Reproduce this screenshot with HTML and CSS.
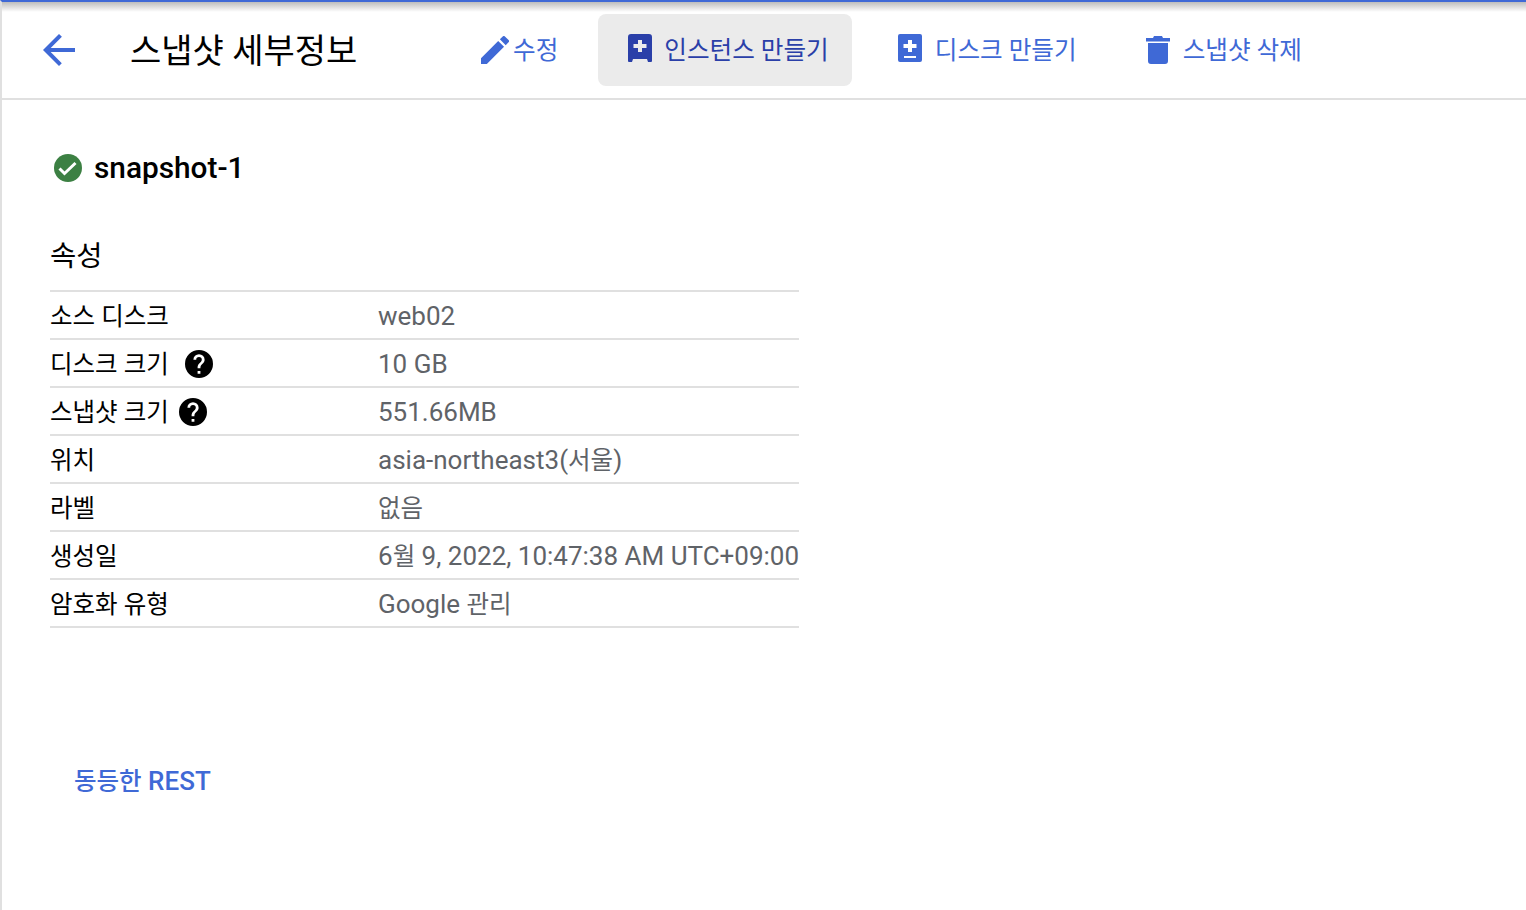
FILE: index.html
```html
<!DOCTYPE html>
<html lang="ko">
<head>
    <meta charset="UTF-8">
    <title>스냅샷 세부정보</title>
    <link rel="stylesheet" href="styles.css">
</head>
<body>

<div class="page">
    <header class="toolbar">
        <a class="back-link" href="#" aria-label="뒤로">
            <svg width="32" height="32" viewBox="8 8 32 32"><path d="M40 22H15.7l11.2-11.2L24 8 8 24l16 16 2.8-2.8L15.7 26H40z"/></svg>
        </a>
        <h1 class="page-title">스냅샷 세부정보</h1>
        <nav class="actions">
            <a class="action action-edit" href="#">
                <svg class="icon-low" width="28" height="28" viewBox="3 3 18 18"><path d="M3 17.25V21h3.75L17.81 9.94l-3.75-3.75L3 17.25zM20.71 7.04a1 1 0 0 0 0-1.41l-2.34-2.34a1 1 0 0 0-1.41 0l-1.83 1.83 3.75 3.75 1.83-1.83z"/></svg>
                <span>수정</span>
            </a>
            <a class="action action-active" href="#">
                <svg width="24" height="28" viewBox="0 0 24 28"><path d="M3 0h18a3 3 0 0 1 3 3v24a1 1 0 0 1-1 1h-3l-1-3H5l-1 3H1a1 1 0 0 1-1-1V3a3 3 0 0 1 3-3zm7 6v4H5.500v4H10v4h4v-4h4.500v-4H14V6z" fill-rule="evenodd"/></svg>
                <span>인스턴스 만들기</span>
            </a>
            <a class="action action-disk" href="#">
                <svg width="24" height="28" viewBox="0 0 24 28"><path d="M2 0h20a2 2 0 0 1 2 2v24a2 2 0 0 1-2 2H2a2 2 0 0 1-2-2V2a2 2 0 0 1 2-2zm8 6v4H5.500v4H10v4h4v-4h4.500v-4H14V6zM6 22v2h12v-2z" fill-rule="evenodd"/></svg>
                <span>디스크 만들기</span>
            </a>
            <a class="action action-delete" href="#">
                <svg class="icon-low" width="24" height="28" viewBox="0 0 24 28"><path d="M2 7h20v18a3 3 0 0 1-3 3H5a3 3 0 0 1-3-3zM0 2h7l1-2h8l1 2h7v3.500H0z"/></svg>
                <span>스냅샷 삭제</span>
            </a>
        </nav>
    </header>

    <main class="content">
        <div class="resource-name">
            <svg width="28" height="28" viewBox="0 0 28 28"><circle cx="14" cy="14" r="14" fill="#3c8043"/><path d="M5.500 14.500l5 5 11-10.500" fill="none" stroke="#fff" stroke-width="3"/></svg>
            <span>snapshot-1</span>
        </div>

        <h2 class="section-title">속성</h2>

        <div class="props">
            <div class="prop-row">
                <div class="prop-label">소스 디스크</div>
                <div class="prop-value">web02</div>
            </div>
            <div class="prop-row">
                <div class="prop-label">디스크 크기
                    <svg class="help help-wide" width="28" height="28" viewBox="0 0 24 24"><path d="M12 0a12 12 0 1 0 0 24 12 12 0 0 0 0-24zm1.200 20.400h-2.400V18h2.400zm2.500-9.300l-1.100 1.100c-.9.9-1.400 1.600-1.400 3.400h-2.400v-.6c0-1.300.5-2.500 1.400-3.400l1.500-1.500c.4-.4.7-1 .7-1.700a2.400 2.400 0 0 0-4.800 0H7.200a4.800 4.800 0 0 1 9.600 0c0 1.100-.4 2-1.100 2.700z"/></svg>
                </div>
                <div class="prop-value">10 GB</div>
            </div>
            <div class="prop-row">
                <div class="prop-label">스냅샷 크기
                    <svg class="help" width="28" height="28" viewBox="0 0 24 24"><path d="M12 0a12 12 0 1 0 0 24 12 12 0 0 0 0-24zm1.200 20.400h-2.400V18h2.400zm2.500-9.300l-1.100 1.100c-.9.9-1.400 1.600-1.400 3.400h-2.400v-.6c0-1.300.5-2.500 1.400-3.400l1.500-1.500c.4-.4.7-1 .7-1.700a2.400 2.400 0 0 0-4.800 0H7.200a4.800 4.800 0 0 1 9.600 0c0 1.100-.4 2-1.100 2.700z"/></svg>
                </div>
                <div class="prop-value">551.66MB</div>
            </div>
            <div class="prop-row">
                <div class="prop-label">위치</div>
                <div class="prop-value">asia-northeast3(<span class="ko">서울</span>)</div>
            </div>
            <div class="prop-row">
                <div class="prop-label">라벨</div>
                <div class="prop-value"><span class="ko">없음</span></div>
            </div>
            <div class="prop-row">
                <div class="prop-label">생성일</div>
                <div class="prop-value">6<span class="ko">월</span> 9, 2022, 10:47:38 AM UTC+09:00</div>
            </div>
            <div class="prop-row">
                <div class="prop-label">암호화 유형</div>
                <div class="prop-value">Google <span class="ko">관리</span></div>
            </div>
        </div>

        <a class="rest-link" href="#"><span class="ko">동등한</span> REST</a>
    </main>
</div>

</body>
</html>
```

FILE: styles.css
```css
/* General Styling */
html, body {
    height: 100%;
}

body {
    margin: 0;
    background-color: #fff;
    font-family: Roboto, "Noto Sans CJK KR", sans-serif;
    color: #000;
    overflow: hidden;
}

a {
    text-decoration: none;
}

.page {
    height: 100%;
    box-sizing: border-box;
    border-left: 2px solid #e0e0e0;
    border-top: 2px solid #3f69d6;
    position: relative;
}

/* shadow under the blue line */
.page::before {
    content: "";
    position: absolute;
    top: 0;
    left: 0;
    right: 0;
    height: 10px;
    background: linear-gradient(#bdbdbd, #fff);
}

/* Korean glyphs sit a bit smaller than the latin text */
.ko {
    font-size: 24.5px;
}

/* Toolbar */
.toolbar {
    display: flex;
    align-items: center;
    height: 96px;
    border-bottom: 2px solid #e0e0e0;
    position: relative;
}

.back-link {
    display: flex;
    margin-left: 41px;
}

.back-link svg {
    fill: #3f69d6;
}

.page-title {
    margin: 0 0 0 55px;
    padding-bottom: 3px;
    width: 351px;
    font-size: 34px;
    font-weight: 400;
    white-space: nowrap;
}

.actions {
    display: flex;
    align-items: center;
}

.action {
    display: flex;
    align-items: center;
    box-sizing: border-box;
    height: 72px;
    padding-bottom: 4px;
    gap: 13px;
    color: #3f69d6;
    font-size: 24.6px;
    white-space: nowrap;
    border-radius: 8px;
}

.action svg {
    fill: #3f69d6;
    flex: none;
}

.action .icon-low {
    margin-top: 4px;
}

.action-edit {
    gap: 4px;
}

.action-active {
    margin-left: 40px;
    padding-left: 30px;
    padding-right: 23px;
    gap: 12px;
    background-color: #ebebeb;
    color: #2a3fa8;
}

.action-active svg {
    fill: #2a3fa8;
}

.action-disk {
    margin-left: 46px;
}

.action-delete {
    margin-left: 69px;
}

/* Main content */
.content {
    padding: 0 0 0 48px;
}

.resource-name {
    display: flex;
    align-items: center;
    gap: 12px;
    margin: 47px 0 0 4px;
    height: 40px;
    font-size: 29.8px;
    font-weight: 500;
}

.resource-name svg {
    margin-top: 2px;
}

.section-title {
    margin: 0;
    padding-top: 49px;
    height: 54px;
    font-size: 28.5px;
    font-weight: 400;
    line-height: 42px;
}

/* Property table */
.props {
    width: 749px;
    border-top: 2px solid #e0e0e0;
}

.prop-row {
    display: flex;
    align-items: center;
    height: 46px;
    border-bottom: 2px solid #e0e0e0;
    font-size: 26px;
    line-height: 46px;
}

.prop-label {
    display: flex;
    align-items: center;
    box-sizing: border-box;
    width: 328px;
    flex: none;
    padding-top: 4px;
    font-size: 24.5px;
}

.prop-value {
    padding-top: 2px;
    color: #5f6368;
    white-space: nowrap;
}

.help {
    margin-left: 10px;
    margin-top: -2px;
}

.help-wide {
    margin-left: 16px;
}

.rest-link {
    display: inline-block;
    margin: 134px 0 0 24px;
    color: #3f69d6;
    font-size: 26px;
    font-weight: 500;
}
```
